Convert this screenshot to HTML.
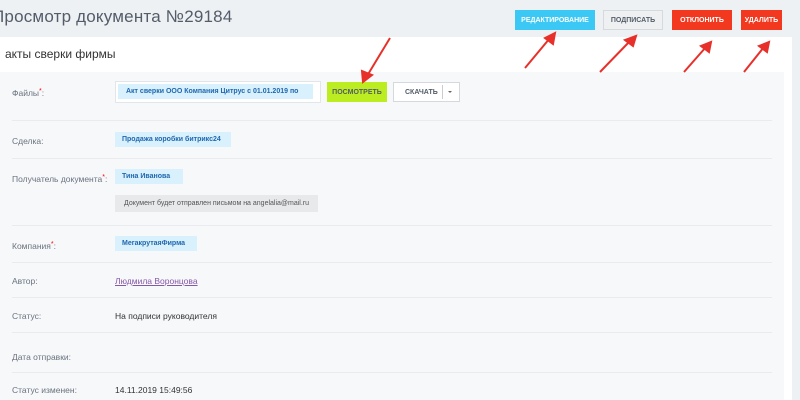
<!DOCTYPE html>
<html><head><meta charset="utf-8"><style>
*{margin:0;padding:0;box-sizing:border-box}
body{width:800px;height:400px;overflow:hidden;background:#eef1f4;font-family:"Liberation Sans",sans-serif;position:relative}
.a{position:absolute}
.title{left:-8px;top:7px;font-size:17px;color:#535c69;letter-spacing:.2px}
.panel{left:0;top:37px;width:792px;height:363px;background:#fff}
.sub{left:5px;top:47px;font-size:12px;color:#333}
.content{left:0;top:72px;width:784px;height:328px;background:#f7f8fa}
.btn{height:20px;font-size:7px;font-weight:bold;display:flex;align-items:center;justify-content:center;color:#fff;white-space:nowrap}
.lbl{left:12px;font-size:8.5px;color:#6a737f}
.lbl i{color:#f00;font-style:normal;font-size:7px;vertical-align:top}
.chip{height:15px;background:#d8f1fc;color:#2067b0;font-size:7px;font-weight:bold;display:flex;align-items:center;padding-left:7px;white-space:nowrap;overflow:hidden}
.line{left:12px;width:760px;height:1px;background:#e9ebee}
.val{font-size:8.5px;color:#333}
</style></head><body>
<div class="a title">Просмотр документа №29184</div>
<div class="a btn" style="left:515px;top:10px;width:80px;background:#3bc8f5">РЕДАКТИРОВАНИЕ</div>
<div class="a btn" style="left:603px;top:10px;width:60px;background:#eef0f2;border:1px solid #d7dadd;color:#535c69">ПОДПИСАТЬ</div>
<div class="a btn" style="left:672px;top:10px;width:60px;background:#f2391f">ОТКЛОНИТЬ</div>
<div class="a btn" style="left:741px;top:10px;width:41px;background:#f2391f">УДАЛИТЬ</div>
<div class="a panel"></div>
<div class="a sub">акты сверки фирмы</div>
<div class="a content"></div>

<div class="a lbl" style="top:88px">Файлы<i>*</i>:</div>
<div class="a" style="left:115px;top:81px;width:206px;height:22px;background:#fff;border:1px solid #e3e6e9"></div>
<div class="a chip" style="left:118px;top:84px;width:195px;padding-left:8px">Акт сверки ООО Компания Цитрус с 01.01.2019 по</div>
<div class="a btn" style="left:327px;top:82px;width:60px;background:#bbed21;color:#535c69">ПОСМОТРЕТЬ</div>
<div class="a btn" style="left:393px;top:82px;width:67px;background:#fff;border:1px solid #d5d8dc;color:#535c69;justify-content:flex-start;padding-left:11px">СКАЧАТЬ</div>
<div class="a" style="left:442px;top:85px;width:1px;height:14px;background:#ccc"></div>
<div class="a" style="left:448px;top:91px;border-left:2px solid transparent;border-right:2px solid transparent;border-top:2px solid #666"></div>

<div class="a line" style="top:120px"></div>
<div class="a lbl" style="top:136px">Сделка:</div>
<div class="a chip" style="left:115px;top:132px;width:116px">Продажа коробки битрикс24</div>
<div class="a line" style="top:158px"></div>
<div class="a lbl" style="top:174px">Получатель документа<i>*</i>:</div>
<div class="a chip" style="left:115px;top:169px;width:68px">Тина Иванова</div>
<div class="a" style="left:115px;top:195px;width:203px;height:17px;background:#e8e9eb;font-size:7px;color:#555;padding:5px 0 0 9px;white-space:nowrap">Документ будет отправлен письмом на angelalia@mail.ru</div>
<div class="a line" style="top:225px"></div>
<div class="a lbl" style="top:241px">Компания<i>*</i>:</div>
<div class="a chip" style="left:115px;top:236px;width:82px">МегакрутаяФирма</div>
<div class="a line" style="top:262px"></div>
<div class="a lbl" style="top:276px">Автор:</div>
<div class="a val" style="left:115px;top:276px;color:#8659a8;text-decoration:underline">Людмила Воронцова</div>
<div class="a line" style="top:297px"></div>
<div class="a lbl" style="top:311px">Статус:</div>
<div class="a val" style="left:115px;top:311px">На подписи руководителя</div>
<div class="a line" style="top:332px"></div>
<div class="a lbl" style="top:352px">Дата отправки:</div>
<div class="a line" style="top:372px"></div>
<div class="a lbl" style="top:385px">Статус изменен:</div>
<div class="a val" style="left:115px;top:385px">14.11.2019 15:49:56</div>

<svg class="a" style="left:0;top:0" width="800" height="400">
<g stroke="#e8302a" stroke-width="2" fill="#e8302a">
<line x1="390" y1="38" x2="367" y2="76"/><polygon points="363,82 362,71 372,75"/>
<line x1="525" y1="68" x2="550" y2="38"/><polygon points="555,33 553,44 545,38"/>
<line x1="600" y1="72" x2="630" y2="41"/><polygon points="636,36 633,46 625,40"/>
<line x1="684" y1="72" x2="706" y2="47"/><polygon points="711,42 709,52 701,46"/>
<line x1="744" y1="72" x2="764" y2="47"/><polygon points="769,42 767,52 759,46"/>
</g></svg>
</body></html>
